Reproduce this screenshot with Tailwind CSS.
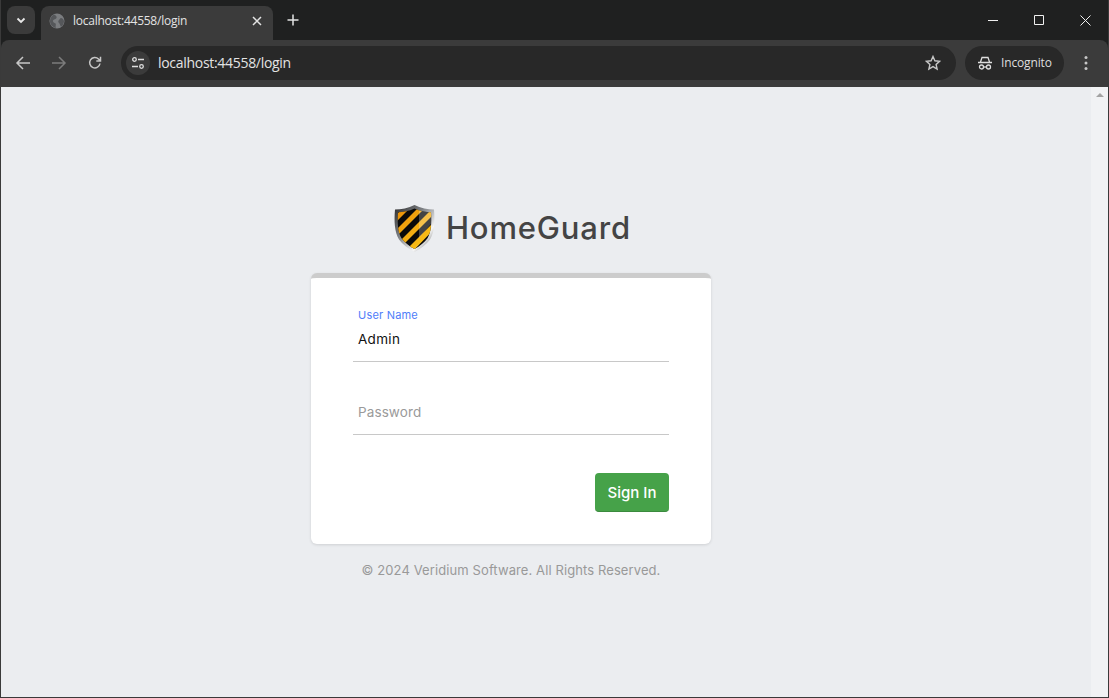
<!DOCTYPE html>
<html lang="en">
  <head>
    <meta charset="UTF-8" />
    <meta name="viewport" content="width=device-width, initial-scale=1.0" />
    <title>localhost:44558/login</title>
    <script src="https://cdn.jsdelivr.net/npm/@tailwindcss/browser@4"></script>
  </head>
  <body class="h-[698px] w-[1109px] overflow-hidden bg-[#1f2020] font-['Inter',sans-serif]">
    <div class="flex h-full flex-col border-x border-b border-[#3a3a3a]">
      <!-- Tab strip -->
      <div class="flex h-[40px] items-stretch bg-[#1f2020]">
        <div class="mt-[6px] ml-[6px] flex h-[28px] w-[28px] items-center justify-center rounded-lg bg-[#3b3b3b]">
          <svg width="12" height="12" viewBox="0 0 12 12" fill="none" stroke="#e8e8e8" stroke-width="1.8"><path d="M2.5 4.5 6 8l3.5-3.5" /></svg>
        </div>
        <div class="mt-[6px] ml-[6px] flex w-[232px] items-center rounded-t-lg bg-[#3b3b3b] pr-[11px] pb-[5px] pl-[8px]">
          <svg width="16" height="16" viewBox="0 0 16 16">
            <circle cx="8" cy="8" r="7.5" fill="#7b7d80" />
            <path d="M5 1.500c2 1 3 2 2.500 3.500S4.500 6 4 7.500 5.500 10 6.500 10.500 6 14 7 15c-3-.5-6-3-6-7 0-3 2-5.500 4-6.500zM12 5c1 0 2.500 1 3 3 0 2-1 4.500-3 6-1-2-1-3-2-4s-1-2 0-3 1-2 2-2z" fill="#55575a" />
          </svg>
          <span class="ml-[8px] flex-1 font-['Open_Sans',sans-serif] text-[12px] tracking-[-0.25px] whitespace-nowrap text-[#e3e3e3]">localhost:44558/login</span>
          <svg width="10" height="10" viewBox="0 0 10 10" stroke="#e3e3e3" stroke-width="1.500"><path d="M1 1l8 8M9 1 1 9" /></svg>
        </div>
        <div class="mt-[6px] ml-[14px] flex h-[28px] w-[12px] items-center justify-center">
          <svg width="12" height="12" viewBox="0 0 12 12" stroke="#e3e3e3" stroke-width="1.500"><path d="M6 .5v11M.5 6h11" /></svg>
        </div>
        <div class="ml-auto flex items-center">
          <div class="flex w-[46px] justify-center">
            <svg width="10" height="10" viewBox="0 0 10 10" stroke="#f0f0f0"><path d="M0 5.500h10" /></svg>
          </div>
          <div class="flex w-[46px] justify-center">
            <svg width="10" height="10" viewBox="0 0 10 10" fill="none" stroke="#f0f0f0"><path d="M.5.500h9v9h-9z" /></svg>
          </div>
          <div class="flex w-[46px] justify-center">
            <svg width="11" height="11" viewBox="0 0 11 11" stroke="#f0f0f0"><path d="M.5.500l10 10M10.500.500l-10 10" /></svg>
          </div>
        </div>
      </div>

      <!-- Toolbar -->
      <div class="flex h-[47px] items-center rounded-t-lg bg-[#3b3b3b] pb-[2px]">
        <svg width="16" height="16" viewBox="0 0 16 16" fill="none" stroke="#c7c7c7" stroke-width="1.500" class="ml-[14px]"><path d="M15 8H2M8 2 2 8l6 6" /></svg>
        <svg width="16" height="16" viewBox="0 0 16 16" fill="none" stroke="#7c7c7c" stroke-width="1.500" class="ml-[20px]"><path d="M1 8h13M8 2l6 6-6 6" /></svg>
        <svg width="16" height="16" viewBox="0 0 16 16" fill="none" stroke="#c7c7c7" stroke-width="1.500" class="ml-[20px]"><path d="M13 8.500A5.200 5.200 0 1 1 11.500 4L13.500 6M13.500 1.800V6H9.300" /></svg>

        <div class="ml-[18px] flex h-[34px] w-[835px] items-center rounded-full bg-[#282828] pr-[15px] pl-[5px]">
          <div class="flex h-[24px] w-[24px] items-center justify-center rounded-full bg-[#3b3b3b]">
            <svg width="14" height="14" viewBox="0 0 14 14" fill="none" stroke="#dedede" stroke-width="1.300">
              <circle cx="3.500" cy="3.500" r="1.800" /><path d="M7 3.500h6M1 10.500h6" /><circle cx="10.500" cy="10.500" r="1.800" />
            </svg>
          </div>
          <span class="ml-[8px] flex-1 font-['Open_Sans',sans-serif] text-[14px] tracking-[-0.3px] text-[#e3e3e3]">localhost:44558/login</span>
          <svg width="16" height="16" viewBox="0 0 16 16" fill="none" stroke="#c7c7c7" stroke-width="1.400"><path d="M8 1.500l1.900 4.300 4.600.5-3.400 3.100 1 4.600L8 11.600l-4.100 2.400 1-4.600L1.500 6.300l4.600-.5z" /></svg>
        </div>

        <div class="ml-[9px] flex h-[34px] w-[99px] items-center rounded-full bg-[#282828] pl-[12px]">
          <svg width="16" height="16" viewBox="0 0 16 16" fill="none" stroke="#dedede" stroke-width="1.300">
            <path d="M1 7.500h14M3.500 7 5 2.500h6L12.500 7" /><circle cx="4.500" cy="12" r="2" /><circle cx="11.500" cy="12" r="2" /><path d="M6.500 12h3" />
          </svg>
          <span class="ml-[8px] font-['Open_Sans',sans-serif] text-[12px] tracking-[-0.15px] text-[#dedede]">Incognito</span>
        </div>
        <svg width="4" height="16" viewBox="0 0 4 16" fill="#c7c7c7" class="ml-[20px]"><circle cx="2" cy="2.500" r="1.500" /><circle cx="2" cy="8" r="1.500" /><circle cx="2" cy="13.500" r="1.500" /></svg>
      </div>

      <!-- Page -->
      <div class="flex min-h-0 flex-1 bg-[#ebedf0]">
        <main class="flex flex-1 flex-col items-center pt-[118px] pr-[70px] text-[#3f3f3f]">
          <div class="ml-[3px] flex h-[47px] items-center">
            <svg width="41" height="47" viewBox="0 0 41 47" class="mr-[11px]">
              <defs>
                <linearGradient id="rim" x1="0" y1="0" x2="1" y2="1">
                  <stop offset="0" stop-color="#2a2a2a" /><stop offset="0.400" stop-color="#7f8286" /><stop offset="0.720" stop-color="#f6f6f6" /><stop offset="1" stop-color="#4a4d50" />
                </linearGradient>
                <linearGradient id="amber" x1="0" y1="0" x2="1" y2="1">
                  <stop offset="0" stop-color="#e58405" /><stop offset="1" stop-color="#ffd01c" />
                </linearGradient>
                <clipPath id="shield-face"><path d="M20.500 3.500C15 6 9 7.200 4 7.200c-.7 10.800-.2 19.800 3.500 26 3 4.300 7.500 7.700 13 10.800 5.500-3.100 10-6.500 13-10.800 3.700-6.200 4.200-15.200 3.500-26C32 7.200 26 6 20.500 3.500z" /></clipPath>
              </defs>
              <path d="M20.500 0C14.500 3 7 4.500 1 4.500c-1 12-.5 22 4 30 3.500 5 9 9 15.500 12.500 6.500-3.500 12-7.500 15.500-12.500 4.500-8 5-18 4-30C34 4.500 26.500 3 20.500 0z" fill="url(#rim)" />
              <g clip-path="url(#shield-face)">
                <rect width="41" height="47" fill="#0a0a0a" />
                <path d="M-4 16 15-3h7L-4 23zM-4 31 30-3h7L-4 38zM2 40 45-3v7L6 43zM12 45 45 12v7L19 46z" fill="url(#amber)" />
                <path d="M25 4h12v15L25 33z" fill="#fff" fill-opacity="0.240" />
              </g>
            </svg>
            <span class="-mt-[3px] text-[31px] leading-none font-medium tracking-[0.85px] text-[#444]">HomeGuard</span>
          </div>

          <div class="mt-[21px] flex h-[271px] w-[400px] flex-col rounded-md border-t-[5px] border-[#cccccc] bg-white px-[42px] pt-[30px] shadow-[0_1px_3px_rgba(0,0,0,0.12)]">
            <div class="h-[54px] border-b border-[#c8c8c8] px-[5px]">
              <div class="text-[11px] leading-[14px] tracking-[0.2px] text-[#4f7df9]">User Name</div>
              <div class="mt-[7px] text-[13.500px] leading-[20px] tracking-[0.3px] text-[#111]">Admin</div>
            </div>
            <div class="mt-[18px] flex h-[55px] items-center border-b border-[#c8c8c8] px-[5px] pt-[11px]">
              <span class="text-[13.500px] tracking-[0.1px] text-[#9a9a9a]">Password</span>
            </div>
            <div class="mt-[38px] flex justify-end">
              <button class="h-[39px] w-[74px] rounded border-b border-[#3b8a3e] bg-[#46a249] pt-[2px] text-[15px] font-[450] text-white">Sign In</button>
            </div>
          </div>

          <p class="mt-[17px] text-[13px] leading-[18px] tracking-[0.1px] text-[#999]">© 2024 Veridium Software. All Rights Reserved.</p>
        </main>

        <!-- Scrollbar -->
        <div class="flex w-[17px] justify-center bg-[#f1f2f4] pt-[6px]">
          <div class="h-0 w-0 border-x-[4px] border-b-[4px] border-x-transparent border-b-[#a3a3a3]"></div>
        </div>
      </div>
    </div>
  </body>
</html>
